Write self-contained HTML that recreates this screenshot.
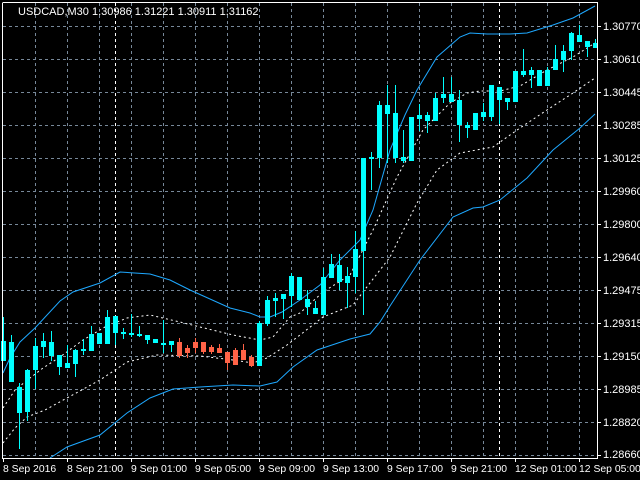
<!DOCTYPE html>
<html><head><meta charset="utf-8"><style>
html,body{margin:0;padding:0;background:#000;width:640px;height:480px;overflow:hidden}
svg{display:block}
text{font-family:"Liberation Sans",sans-serif;font-size:11px;fill:#fff}
.tl{font-size:10.4px}
</style></head><body>
<svg id="s" width="640" height="480" viewBox="0 0 640 480" xmlns="http://www.w3.org/2000/svg">
<rect width="640" height="480" fill="#000"/>
<g id="grid" stroke="#778899" stroke-width="1" stroke-dasharray="3,3" fill="none"></g>
<g id="sep" stroke="#fff" stroke-width="1" stroke-dasharray="3,3" fill="none">
<line x1="115.5" y1="3" x2="115.5" y2="458"/>
<line x1="499.5" y1="3" x2="499.5" y2="458"/>
</g>
<g fill="none" stroke="#fff" stroke-width="1" stroke-dasharray="2,3">
<polyline points="3,408 15,390 30,378 43,368 60,357 83,340 105,327 127,318 150,315 180,322 200,327 233,335 260,340 273,337 290,317 300,313 323,292 350,275 373,230 397,177 423,130 450,103 467,93 480,91 500,91 520,86 547,70 573,57 595,43"/>
<polyline points="3,443 15,428 27,417 45,410 67,398 100,380 127,362 157,355 200,356 233,360 253,363 267,358 287,345 300,335 323,317 353,305 390,257 417,203 437,170 460,153 493,147 520,128 547,110 573,93 595,78"/>
</g>
<g fill="none" stroke="#1ea8ff" stroke-width="1">
<polyline points="3,373 10,358 20,342 35,328 60,301 73,292 100,283 120,272 150,274 170,280 190,290 230,308 250,313 260,317 270,317 282,312 300,300 320,285 340,260 360,240 373,210 390,150 405,115 417,90 437,57 460,37 470,33 487,34 510,34 527,33 553,25 573,18 595,6"/>
<polyline points="50,458 67,447 100,435 127,413 150,398 173,389 200,387 233,385 260,386 277,382 293,367 317,350 350,339 370,334 380,322 390,306 420,260 453,217 473,208 483,207 500,200 527,178 553,150 580,128 595,114"/>
</g>
<g id="candles"></g>
<g fill="none" stroke="#fff" stroke-width="1">
<polyline points="2.5,3 2.5,458.5 597.5,458.5 597.5,2.5 2.5,2.5"/>
</g>
<g id="axis"></g>
<text x="18" y="15" style="font-size:11px" fill="#e8e8e8">USDCAD,M30  1.30986 1.31221 1.30911 1.31162</text>
</svg>
<script>
var NS="http://www.w3.org/2000/svg";
function el(p,n,a,t){var e=document.createElementNS(NS,n);for(var k in a)e.setAttribute(k,a[k]);if(t)e.textContent=t;document.getElementById(p).appendChild(e);return e;}
var hy=[26,59,92,125,158,191,224,257,290,323,356,389,422,455];
hy.forEach(function(y){el("grid","line",{x1:3,y1:y+.5,x2:597,y2:y+.5});});
for(var x=35;x<597;x+=32){if(x==115||x==499)continue;el("grid","line",{x1:x+.5,y1:3,x2:x+.5,y2:458});}
var pl=["1.30770","1.30610","1.30445","1.30285","1.30125","1.29960","1.29800","1.29640","1.29475","1.29315","1.29150","1.28985","1.28820","1.28660"];
hy.forEach(function(y,i){var ty=(i==13)?y-1:y;el("axis","text",{x:603,y:ty+4},pl[i]);el("axis","line",{x1:597,y1:y+.5,x2:601,y2:y+.5,stroke:"#fff"});});
var tl=["8 Sep 2016","8 Sep 21:00","9 Sep 01:00","9 Sep 05:00","9 Sep 09:00","9 Sep 13:00","9 Sep 17:00","9 Sep 21:00","12 Sep 01:00","12 Sep 05:00"];
tl.forEach(function(t,i){var x=3+64*i;el("axis","text",{x:x,y:472,"class":"tl"},t);el("axis","line",{x1:x+.5,y1:458,x2:x+.5,y2:462,stroke:"#fff"});});
var c=[[317,361,341,361],[335,382,342,382],[383,449,387,413],[369,421,370,412],[338,389,346,370],[333,358,341,347],[331,361,342,356],[355,375,355,367],[345,368,363,368],[349,377,350,364],[339,355,349,350],[326,351,334,351],[333,344,333,344],[310,344,317,344],[316,345,316,333],[328,339,332,333],[314,337,333,334],[326,337,334,335],[335,344,335,340],[339,343,339,343],[320,353,343,344],[341,352,341,345],[338,358,342,356,1],[345,358,348,353,1],[338,353,342,348,1],[342,354,342,352,1],[345,354,347,352,1],[344,353,348,353,1],[352,370,352,363,1],[348,365,350,365,1],[344,360,350,360,1],[355,367,357,366,1],[321,366,323,366],[296,326,300,324],[293,317,298,301],[294,319,294,299],[273,307,276,296],[277,300,277,300],[290,315,299,307],[301,314,308,314],[268,315,277,315],[254,278,264,278],[254,290,265,282],[267,308,276,283],[231,293,249,277],[158,315,158,251],[152,190,157,159],[101,168,105,158],[85,163,105,114],[85,163,113,158],[130,163,157,161],[117,161,117,161],[104,131,115,119],[112,133,115,121],[93,121,98,121],[77,103,94,98],[77,102,94,102],[90,142,100,125],[122,138,125,128],[113,130,113,130],[103,121,112,117],[85,121,85,117],[87,124,87,100],[98,110,98,102],[71,102,71,102],[49,77,71,75],[67,88,70,75],[70,86,70,86],[67,86,70,86],[45,70,59,70],[45,72,51,60],[32,60,33,51],[25,42,35,42],[41,57,41,47],[39,48,43,48]];
c.forEach(function(d,k){var col=d[4]?"#ff6347":"#00ffff";var x=1+8*k;
el("candles","rect",{x:x+2,y:d[0],width:1,height:Math.max(1,d[1]-d[0]),fill:col});
var w=5;if(x+w>597)w=597-x;
el("candles","rect",{x:x,y:d[2],width:w,height:Math.max(2,d[3]-d[2]),fill:col});});
</script>
</body></html>
